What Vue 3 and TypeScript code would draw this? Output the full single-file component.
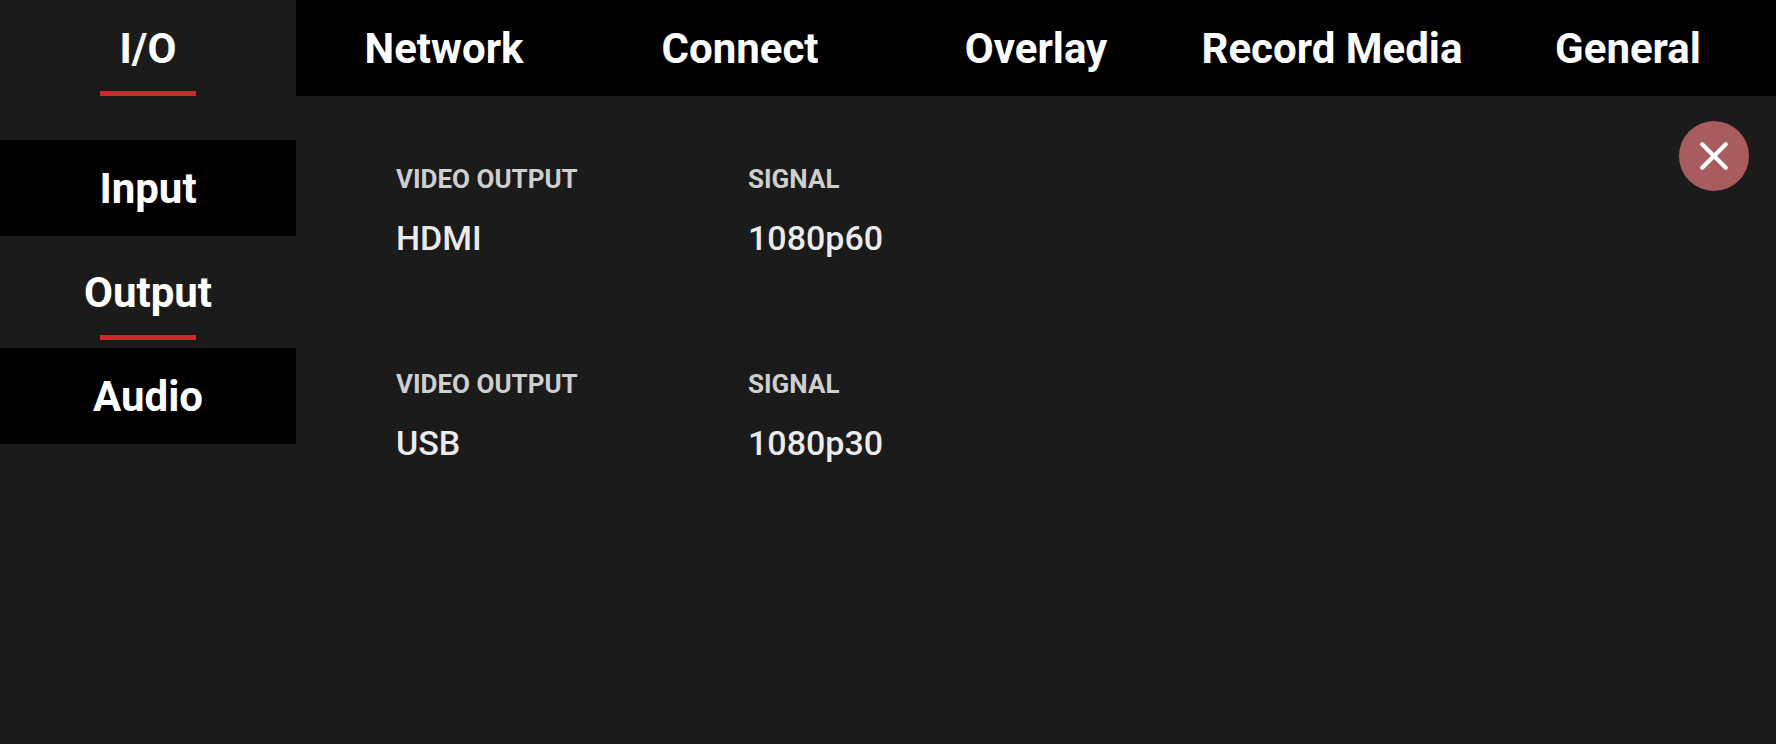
<script setup lang="ts">
import { ref } from 'vue'

interface OutputInfo {
  id: string
  name: string
  signal: string
}

const tabs: string[] = ['I/O', 'Network', 'Connect', 'Overlay', 'Record Media', 'General']
const sections: string[] = ['Input', 'Output', 'Audio']
const outputs: OutputInfo[] = [
  { id: 'hdmi', name: 'HDMI', signal: '1080p60' },
  { id: 'usb', name: 'USB', signal: '1080p30' },
]

const activeTab = ref<string>('I/O')
const activeSection = ref<string>('Output')
</script>

<template>
  <div class="screen">
    <nav class="tabs">
      <button
        v-for="tab in tabs"
        :key="tab"
        type="button"
        class="item"
        :class="{ active: tab === activeTab }"
        @click="activeTab = tab"
      >
        <span>{{ tab }}</span>
      </button>
    </nav>

    <div class="body">
      <nav class="sections">
        <button
          v-for="section in sections"
          :key="section"
          type="button"
          class="item"
          :class="{ active: section === activeSection }"
          @click="activeSection = section"
        >
          <span>{{ section }}</span>
        </button>
      </nav>

      <main class="outputs">
        <dl v-for="output in outputs" :key="output.id" class="output">
          <div>
            <dt>VIDEO OUTPUT</dt>
            <dd>{{ output.name }}</dd>
          </div>
          <div>
            <dt>SIGNAL</dt>
            <dd>{{ output.signal }}</dd>
          </div>
        </dl>
      </main>

      <button type="button" class="close" aria-label="Close">
        <svg viewBox="0 0 70 70" aria-hidden="true">
          <path d="M23.2 23.2 46.8 46.8M46.8 23.2 23.2 46.8" />
        </svg>
      </button>
    </div>
  </div>
</template>

<style>
body {
  margin: 0;
  background: #1b1b1b;
}
</style>

<style scoped>
.screen {
  display: flex;
  flex-direction: column;
  min-height: 100vh;
  background: #1b1b1b;
  color: #fff;
  font-family: Roboto, "Liberation Sans", sans-serif;
}

.tabs {
  display: grid;
  grid-template-columns: repeat(6, 1fr);
  background: #000;
}

.item {
  display: flex;
  align-items: center;
  justify-content: center;
  position: relative;
  height: 96px;
  padding: 2px 0 0;
  border: 0;
  background: #000;
  color: #fff;
  font: inherit;
  font-size: 42px;
  font-weight: 700;
  line-height: 48px;
  white-space: nowrap;
  cursor: pointer;
}

.item.active {
  background: #1b1b1b;
}

.item.active::after {
  content: "";
  position: absolute;
  bottom: 0;
  left: 50%;
  width: 96px;
  height: 5px;
  margin-left: -48px;
  background: #d3272b;
}

.body {
  display: grid;
  grid-template-columns: 1fr 5fr;
  position: relative;
  flex: 1;
}

.sections {
  display: flex;
  flex-direction: column;
  gap: 8px;
  padding-top: 44px;
}

.outputs {
  display: flex;
  flex-direction: column;
  gap: 102px;
  padding: 67px 100px 0;
}

.output {
  display: grid;
  grid-template-columns: repeat(2, minmax(0, 352px));
  margin: 0;
}

dt {
  color: #cfcfcf;
  font-size: 26px;
  font-weight: 700;
  line-height: 32px;
}

dd {
  margin: 15px 0 0;
  color: #ebebeb;
  font-size: 34px;
  font-weight: 500;
  line-height: 56px;
}

.close {
  position: absolute;
  top: 25px;
  right: 27px;
  width: 70px;
  height: 70px;
  padding: 0;
  border: 0;
  border-radius: 50%;
  background: #a85c5d;
  cursor: pointer;
}

.close svg {
  display: block;
  fill: none;
  stroke: #fff;
  stroke-width: 4.2;
  stroke-linecap: round;
}
</style>
